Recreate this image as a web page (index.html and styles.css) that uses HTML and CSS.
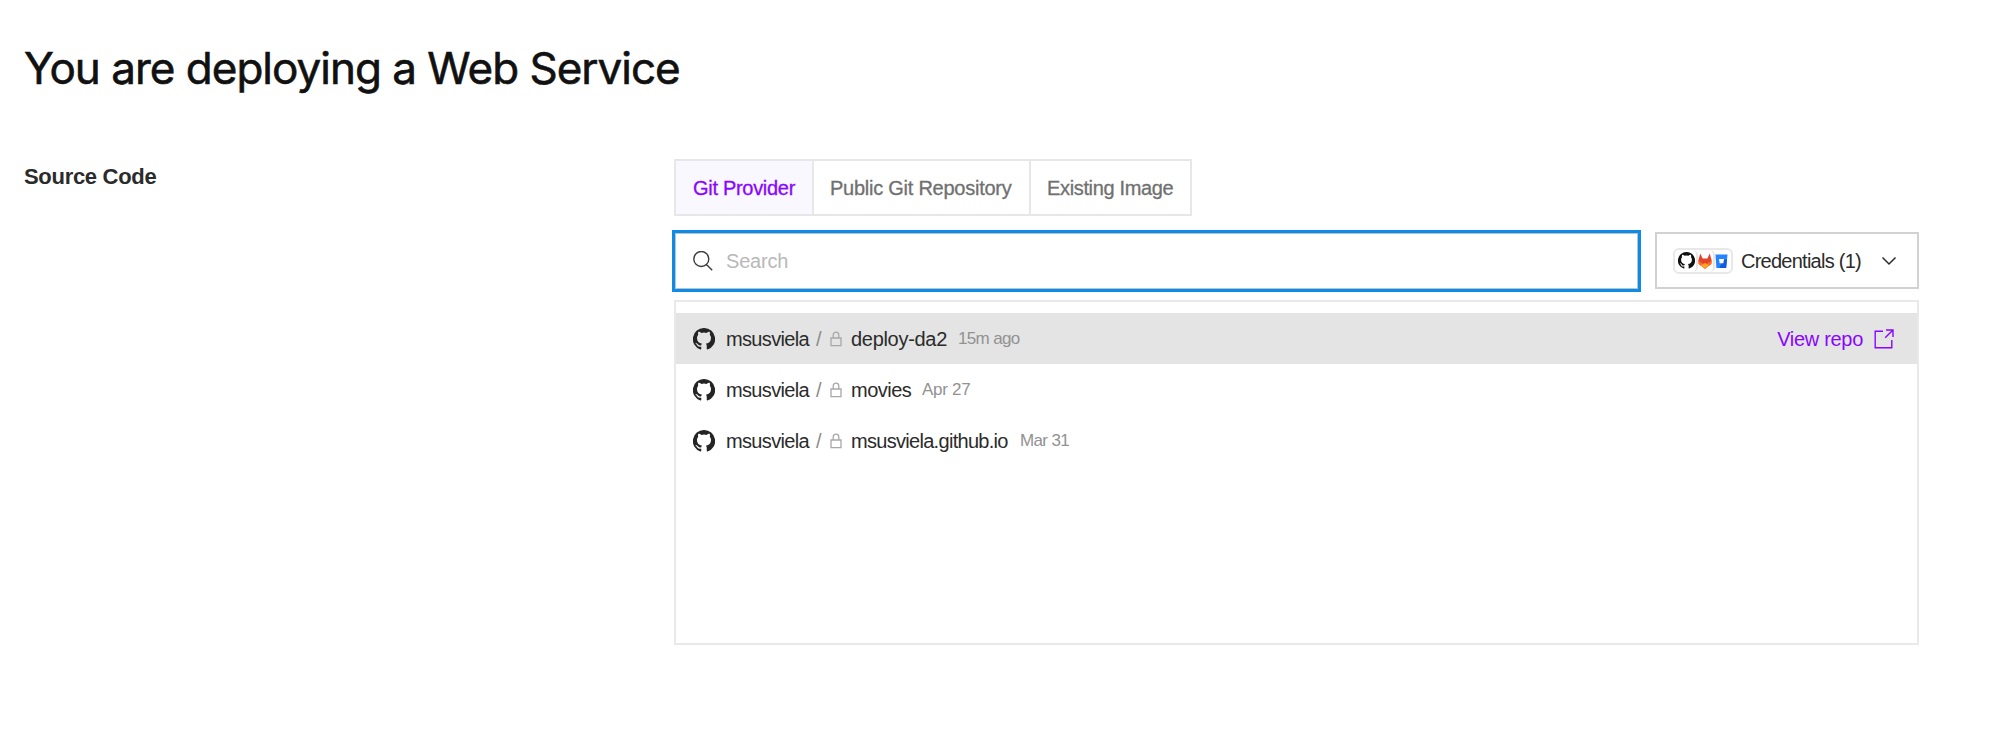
FILE: index.html
```html
<!DOCTYPE html>
<html lang="en">
<head>
<meta charset="utf-8">
<title>New Web Service</title>
<link rel="stylesheet" href="styles.css">
</head>
<body>
<svg class="defs" aria-hidden="true">
  <symbol id="github" viewBox="0 0 16 16"><path fill="currentColor" d="M8 0a8 8 0 0 0-2.600 15.600c.4.100.6-.2.600-.5v-1.500c-2.200.4-2.800-.6-3-1.200-.2-.3-.5-.8-.9-1-.3-.2-.4-.5 0-.5.7 0 1.200.6 1.500 1 .6 1 1.600.9 2.400.6.100-.5.300-.9.600-1.100C4.300 11.100 2.900 9.800 2.900 7.300c0-1 .3-1.800.9-2.400-.2-.6-.2-1.500.1-2.200.8 0 1.600.4 2.300.9a7 7 0 0 1 3.600 0c.7-.5 1.500-.9 2.300-.9.3.7.3 1.600.1 2.200.6.6.9 1.400.9 2.400 0 2.500-1.400 3.800-3.700 4.100.4.400.6.900.6 1.600v2.100c0 .3.200.6.600.5A8 8 0 0 0 8 0z"/></symbol>
  <symbol id="lock" viewBox="0 0 12 16"><path fill="none" stroke="currentColor" stroke-width="1.3" d="M1 7h10v7.6H1zM3.2 7V4a2.8 2.8 0 0 1 5.6 0v3"/></symbol>
</svg>
<main class="page">
  <h1 class="title">You are deploying a Web Service</h1>
  <section class="field">
    <h2 class="label">Source Code</h2>
    <div class="content">
      <div class="tabs">
        <button class="tab tab-git active"><span>Git Provider</span></button>
        <button class="tab tab-public"><span>Public Git Repository</span></button>
        <button class="tab tab-image"><span>Existing Image</span></button>
      </div>
      <div class="toolbar">
        <div class="search">
          <svg class="search-icon" viewBox="0 0 20 20"><path fill="none" stroke="currentColor" stroke-width="1.4" d="M15.800 8A7.500 7.500 0 1 1 .8 8a7.500 7.500 0 0 1 15 0zM13.500 13.500l5.700 5.700"/></svg>
          <span class="placeholder">Search</span>
        </div>
        <button class="credentials">
          <span class="providers">
            <span class="chip chip-github"><svg viewBox="0 0 16 16"><use href="#github"/></svg></span>
            <span class="chip chip-gitlab"><svg viewBox="0 0 14 16"><path fill="#e24329" d="M.3 7.500 2.300.500 4.600 5.500h4.800L11.700.500l2 7-.5 3.500L7 15.500.8 11z"/><path fill="#fc6d26" d="M.3 7.500 7 12l6.700-4.500-.3 3.500L7 16 .6 11z"/><path fill="#fca326" d="M3 12.300 7 10l4 2.300L7 16z"/></svg></span>
            <span class="chip chip-bitbucket"><svg viewBox="0 0 14 16"><path fill="#2684ff" d="M.5 1h13L12 15.500H1.500z"/><path fill="#0f5ddb" d="M12.900 6.500 12 15.500H4.500l5-9z"/><path fill="#fff" d="M4.300 5.800h5.400L9 10.500H5z"/></svg></span>
          </span>
          <span class="credentials-text">Credentials (1)</span>
          <svg class="chevron" viewBox="0 0 16 10"><path fill="none" stroke="currentColor" stroke-width="1.500" d="m1.500 1.500 6.500 6.500 6.500-6.500"/></svg>
        </button>
      </div>
      <div class="repos">
        <div class="repo selected">
          <svg class="github"><use href="#github"/></svg>
          <span class="owner">msusviela</span><span class="slash">/</span>
          <svg class="lock"><use href="#lock"/></svg>
          <span class="name name-deploy">deploy-da2</span><span class="time">15m ago</span>
          <a class="view"><span>View repo</span><svg viewBox="0 0 20 20"><path fill="none" stroke="currentColor" stroke-width="1.400" d="M9 2.200H1.200v16.600h16.600V11M12 1h7v7M19 1l-7.800 7.800"/></svg></a>
        </div>
        <div class="repo">
          <svg class="github"><use href="#github"/></svg>
          <span class="owner">msusviela</span><span class="slash">/</span>
          <svg class="lock"><use href="#lock"/></svg>
          <span class="name name-movies">movies</span><span class="time time-apr">Apr 27</span>
        </div>
        <div class="repo">
          <svg class="github"><use href="#github"/></svg>
          <span class="owner">msusviela</span><span class="slash">/</span>
          <svg class="lock"><use href="#lock"/></svg>
          <span class="name name-pages">msusviela.github.io</span><span class="time">Mar 31</span>
        </div>
      </div>
    </div>
  </section>
</main>
</body>
</html>
```

FILE: styles.css
```css
* { box-sizing: border-box; }
body {
  margin: 0;
  background: #fff;
  color: #2b2b2b;
  font: 20px/24px "Liberation Sans", Arial, sans-serif;
  white-space: nowrap;
}
button { font: inherit; color: inherit; background: none; border: 0; padding: 0; }
svg { display: block; flex: none; }
.defs { position: absolute; width: 0; height: 0; }
.page { padding: 40px 80px 0 24px; }
.title {
  margin: 0;
  color: #111;
  font: 400 44px/56px Inter, sans-serif;
  letter-spacing: -1px;
  -webkit-text-stroke: 0.6px;
}
.field { display: grid; grid-template-columns: 650px 1245px; padding-top: 63px; }
.label { margin: 5px 0 0; font-size: 22px; line-height: 26px; letter-spacing: -0.3px; }

.tabs { display: flex; width: 518px; height: 57px; border: 2px solid #e7e7e7; }
.tab { color: #707070; text-align: left; padding-left: 16px; -webkit-text-stroke: 0.3px; }
.tab + .tab { border-left: 2px solid #e7e7e7; }
.tab-git { width: 136px; padding-left: 17px; letter-spacing: -0.3px; }
.tab-public { width: 217px; letter-spacing: -0.25px; }
.tab-image { flex: 1; letter-spacing: -0.35px; }
.tab.active { color: #8a05ff; background: #f9f7ff; }

.toolbar { display: flex; justify-content: space-between; margin-top: 16px; }
.search {
  display: flex;
  align-items: center;
  width: 965px;
  height: 58px;
  padding-left: 17px;
  border: 2px solid #b9c3cc;
  outline: 3px solid #0d8be6;
  outline-offset: -1px;
}
.search-icon { width: 20px; height: 20px; color: #3c3c3c; }
.placeholder { margin-left: 13px; color: #b9b9b9; letter-spacing: -0.2px; }

.credentials {
  display: flex;
  align-items: center;
  width: 264px;
  height: 57px;
  padding-left: 16px;
  border: 2px solid #d2d2d2;
}
.providers { display: flex; width: 60px; height: 26px; border: 2px solid #e8e8e8; border-radius: 6px; }
.chip { display: flex; align-items: center; }
.chip-github { width: 23px; padding-left: 3px; color: #111; border-right: 2px solid #e8e8e8; border-radius: 5px; }
.chip-github svg { width: 17px; height: 17px; }
.chip-gitlab { width: 17px; border-right: 2px solid #e8e8e8; border-radius: 5px; }
.chip-gitlab svg { width: 14px; height: 16px; }
.chip-bitbucket svg { width: 13px; height: 16px; }
.credentials-text { width: 122px; margin-left: 8px; text-align: left; letter-spacing: -0.75px; }
.chevron { width: 16px; height: 10px; margin-left: 18px; }

.repos { height: 345px; margin-top: 10px; padding-top: 11px; border: 2px solid #e9e9e9; }
.repo { display: flex; align-items: center; height: 50.7px; padding: 2px 23px 0 17px; }
.selected { background: #e4e4e4; }
.github { width: 22px; height: 22px; color: #242424; }
.owner { width: 83px; margin-left: 11px; letter-spacing: -0.65px; }
.slash { width: 6px; margin-left: 7px; color: #8c8c8c; }
.lock { width: 12px; height: 16px; margin-left: 8px; color: #a8a8a8; }
.name { margin-left: 9px; letter-spacing: -0.3px; }
.name-deploy { width: 97px; }
.name-movies { width: 61px; letter-spacing: -0.5px; }
.name-pages { width: 159px; letter-spacing: -0.7px; }
.time { margin-left: 10px; color: #929292; font-size: 17px; letter-spacing: -0.65px; }
.time-apr { letter-spacing: -0.3px; }
.view { display: flex; align-items: center; gap: 11px; margin-left: auto; color: #8a05ff; letter-spacing: -0.3px; }
.view svg { width: 20px; height: 20px; }
```
